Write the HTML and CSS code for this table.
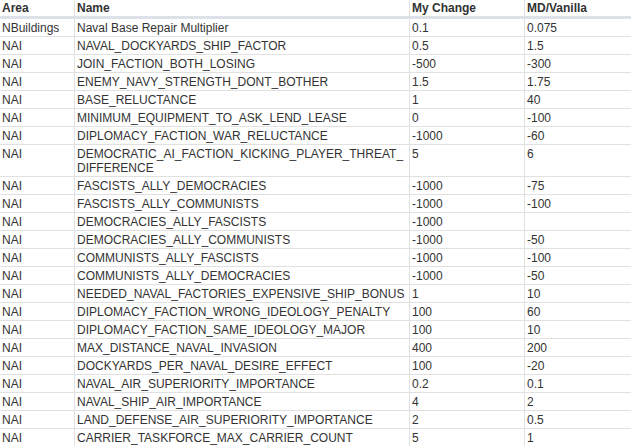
FILE: index.html
```html
<!DOCTYPE html>
<html>
<head>
<meta charset="utf-8">
<link rel="stylesheet" href="styles.css">
</head>
<body>
<table class="grid">
  <colgroup>
    <col class="c-area">
    <col class="c-name">
    <col class="c-mine">
    <col class="c-van">
  </colgroup>
  <thead>
    <tr><th>Area</th><th>Name</th><th>My Change</th><th>MD/Vanilla</th></tr>
  </thead>
  <tbody>
    <tr><td>NBuildings</td><td>Naval Base Repair Multiplier</td><td>0.1</td><td>0.075</td></tr>
    <tr><td>NAI</td><td>NAVAL_DOCKYARDS_SHIP_FACTOR</td><td>0.5</td><td>1.5</td></tr>
    <tr><td>NAI</td><td>JOIN_FACTION_BOTH_LOSING</td><td>-500</td><td>-300</td></tr>
    <tr><td>NAI</td><td>ENEMY_NAVY_STRENGTH_DONT_BOTHER</td><td>1.5</td><td>1.75</td></tr>
    <tr><td>NAI</td><td>BASE_RELUCTANCE</td><td>1</td><td>40</td></tr>
    <tr><td>NAI</td><td>MINIMUM_EQUIPMENT_TO_ASK_LEND_LEASE</td><td>0</td><td>-100</td></tr>
    <tr><td>NAI</td><td>DIPLOMACY_FACTION_WAR_RELUCTANCE</td><td>-1000</td><td>-60</td></tr>
    <tr><td>NAI</td><td>DEMOCRATIC_AI_FACTION_KICKING_PLAYER_THREAT_<wbr>DIFFERENCE</td><td>5</td><td>6</td></tr>
    <tr><td>NAI</td><td>FASCISTS_ALLY_DEMOCRACIES</td><td>-1000</td><td>-75</td></tr>
    <tr><td>NAI</td><td>FASCISTS_ALLY_COMMUNISTS</td><td>-1000</td><td>-100</td></tr>
    <tr><td>NAI</td><td>DEMOCRACIES_ALLY_FASCISTS</td><td>-1000</td><td></td></tr>
    <tr><td>NAI</td><td>DEMOCRACIES_ALLY_COMMUNISTS</td><td>-1000</td><td>-50</td></tr>
    <tr><td>NAI</td><td>COMMUNISTS_ALLY_FASCISTS</td><td>-1000</td><td>-100</td></tr>
    <tr><td>NAI</td><td>COMMUNISTS_ALLY_DEMOCRACIES</td><td>-1000</td><td>-50</td></tr>
    <tr><td>NAI</td><td>NEEDED_NAVAL_FACTORIES_EXPENSIVE_SHIP_BONUS</td><td>1</td><td>10</td></tr>
    <tr><td>NAI</td><td>DIPLOMACY_FACTION_WRONG_IDEOLOGY_PENALTY</td><td>100</td><td>60</td></tr>
    <tr><td>NAI</td><td>DIPLOMACY_FACTION_SAME_IDEOLOGY_MAJOR</td><td>100</td><td>10</td></tr>
    <tr><td>NAI</td><td>MAX_DISTANCE_NAVAL_INVASION</td><td>400</td><td>200</td></tr>
    <tr><td>NAI</td><td>DOCKYARDS_PER_NAVAL_DESIRE_EFFECT</td><td>100</td><td>-20</td></tr>
    <tr><td>NAI</td><td>NAVAL_AIR_SUPERIORITY_IMPORTANCE</td><td>0.2</td><td>0.1</td></tr>
    <tr><td>NAI</td><td>NAVAL_SHIP_AIR_IMPORTANCE</td><td>4</td><td>2</td></tr>
    <tr><td>NAI</td><td>LAND_DEFENSE_AIR_SUPERIORITY_IMPORTANCE</td><td>2</td><td>0.5</td></tr>
    <tr><td>NAI</td><td>CARRIER_TASKFORCE_MAX_CARRIER_COUNT</td><td>5</td><td>1</td></tr>
  </tbody>
</table>
</body>
</html>
```

FILE: styles.css
```css
html, body {
  margin: 0;
  padding: 0;
  background: #ffffff;
}
body {
  font-family: "Liberation Sans", Arial, sans-serif;
  font-size: 12px;
  line-height: 14px;
  color: #333333;
}
.grid {
  width: 631px;
  table-layout: fixed;
  border-collapse: separate;
  border-spacing: 0;
}
.c-area { width: 75px; }
.c-name { width: 335px; }
.c-mine { width: 115px; }
.c-van { width: 106px; }
.grid th,
.grid td {
  text-align: left;
  vertical-align: top;
  padding: 2px 2px 1px 2px;
  border-right: 1px solid #e1e1e1;
  border-bottom: 1px solid #e1e1e1;
}
.grid th:last-child,
.grid td:last-child {
  border-right: none;
}
.grid th {
  font-weight: bold;
  padding: 1px 2px 1px 2px;
  border-bottom: 3px solid #dde2e9;
}
```
